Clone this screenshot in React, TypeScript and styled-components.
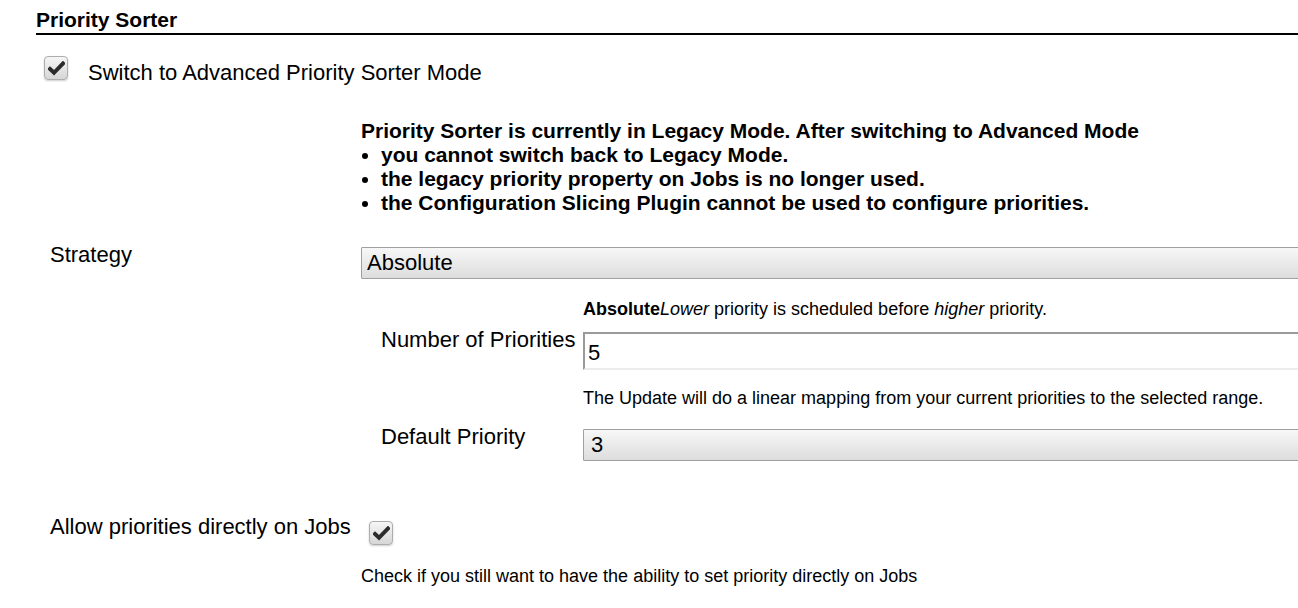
import React from "react";
import styled, { createGlobalStyle } from "styled-components";

const GlobalStyle = createGlobalStyle`
  html, body {
    margin: 0;
    padding: 0;
    background: #fff;
    overflow: hidden;
  }
  body {
    font-family: "Liberation Sans", Arial, sans-serif;
    color: #000;
  }
`;

type CheckProps = { checked?: boolean };

const CheckBox: React.FC<CheckProps> = ({ checked = true }) => (
  <SCheck>
    {checked && (
      <svg width="17" height="15" viewBox="0 0 17 15">
        <path
          d="M2 8 L6 11.8 L15 2.5"
          fill="none"
          stroke="#2b2b2b"
          strokeWidth="4"
          strokeLinecap="square"
        />
      </svg>
    )}
  </SCheck>
);

export default function App() {
  return (
    <SPage>
      <GlobalStyle />
      <STitle>Priority Sorter</STitle>

      <SCheckRow>
        <CheckBox />
        <SCheckLabel>Switch to Advanced Priority Sorter Mode</SCheckLabel>
      </SCheckRow>

      <SForm>
        <SLabel />
        <SWarning>
          Priority Sorter is currently in Legacy Mode. After switching to Advanced Mode
          <SBullets>
            <li>you cannot switch back to Legacy Mode.</li>
            <li>the legacy priority property on Jobs is no longer used.</li>
            <li>the Configuration Slicing Plugin cannot be used to configure priorities.</li>
          </SBullets>
        </SWarning>

        <SLabel>Strategy</SLabel>
        <div>
          <SSelect>Absolute</SSelect>
          <SNested>
            <span />
            <SHelp $top={19} $bottom={12}>
              <b>Absolute</b>
              <i>Lower</i> priority is scheduled before <i>higher</i> priority.
            </SHelp>

            <SSubLabel>Number of Priorities</SSubLabel>
            <SInput defaultValue="5" />

            <span />
            <SHelp $top={17} $bottom={20}>
              The Update will do a linear mapping from your current priorities to the selected range.
            </SHelp>

            <SSubLabel>Default Priority</SSubLabel>
            <SSelect $top={0} $indent={7}>3</SSelect>
          </SNested>
        </div>

        <SLabel $top={54}>Allow priorities directly on Jobs</SLabel>
        <SCheckCell>
          <CheckBox />
          <SHelp $top={20} $bottom={0}>
            Check if you still want to have the ability to set priority directly on Jobs
          </SHelp>
        </SCheckCell>
      </SForm>
    </SPage>
  );
}

const SPage = styled.div`
  padding-left: 36px;
`;

const STitle = styled.h2`
  margin: 0;
  padding-top: 8px;
  padding-bottom: 1px;
  font-size: 21px;
  line-height: 24px;
  font-weight: bold;
  border-bottom: 2px solid #000;
`;

const SCheckRow = styled.div`
  display: flex;
  align-items: flex-start;
  gap: 20px;
  margin-top: 21px;
  padding-left: 8px;
`;

const SCheckLabel = styled.span`
  padding-top: 4px;
  font-size: 22px;
  line-height: 26px;
`;

const SCheck = styled.span`
  display: inline-flex;
  flex: none;
  align-items: center;
  justify-content: center;
  width: 24px;
  height: 24px;
  box-sizing: border-box;
  border: 1px solid #adadad;
  border-radius: 4px;
  background: linear-gradient(#f6f6f6, #d6d6d6);
  box-shadow: 0 1px 2px rgba(0, 0, 0, 0.2);
`;

const SForm = styled.div`
  display: grid;
  grid-template-columns: 325px 960px;
  margin-top: 33px;
`;

const SLabel = styled.div<{ $top?: number }>`
  padding-left: 14px;
  padding-top: ${(p) => p.$top ?? 0}px;
  font-size: 22px;
  line-height: 24px;
`;

const SWarning = styled.div`
  font-size: 21px;
  line-height: 24px;
  font-weight: bold;
  margin-bottom: 28px;
`;

const SBullets = styled.ul`
  margin: 0;
  padding-left: 20px;
`;

const SSelect = styled.div<{ $top?: number; $indent?: number }>`
  height: 32px;
  box-sizing: border-box;
  margin-top: ${(p) => p.$top ?? 4}px;
  padding-left: ${(p) => p.$indent ?? 5}px;
  border: 1px solid #a0a0a0;
  border-radius: 1px;
  background: linear-gradient(#f7f7f7, #dddddd);
  font-size: 22px;
  line-height: 30px;
`;

const SNested = styled.div`
  display: grid;
  grid-template-columns: 222px 1fr;
  align-items: start;
`;

const SSubLabel = styled.div`
  padding-left: 20px;
  margin-top: -4px;
  font-size: 22px;
  line-height: 24px;
`;

const SHelp = styled.div<{ $top: number; $bottom: number }>`
  font-size: 18px;
  line-height: 22px;
  padding: ${(p) => p.$top}px 0 ${(p) => p.$bottom}px;
`;

const SInput = styled.input`
  display: block;
  width: 100%;
  height: 38px;
  box-sizing: border-box;
  margin: 0;
  padding: 4px 3px 0;
  border: 2px solid #ececec;
  border-top-color: #9a9a9a;
  border-left-color: #9a9a9a;
  font-family: "Liberation Sans", Arial, sans-serif;
  font-size: 22px;
  outline: none;
`;

const SCheckCell = styled.div`
  padding-top: 60px;
  padding-left: 8px;

  & > div {
    margin-left: -8px;
  }
`;
